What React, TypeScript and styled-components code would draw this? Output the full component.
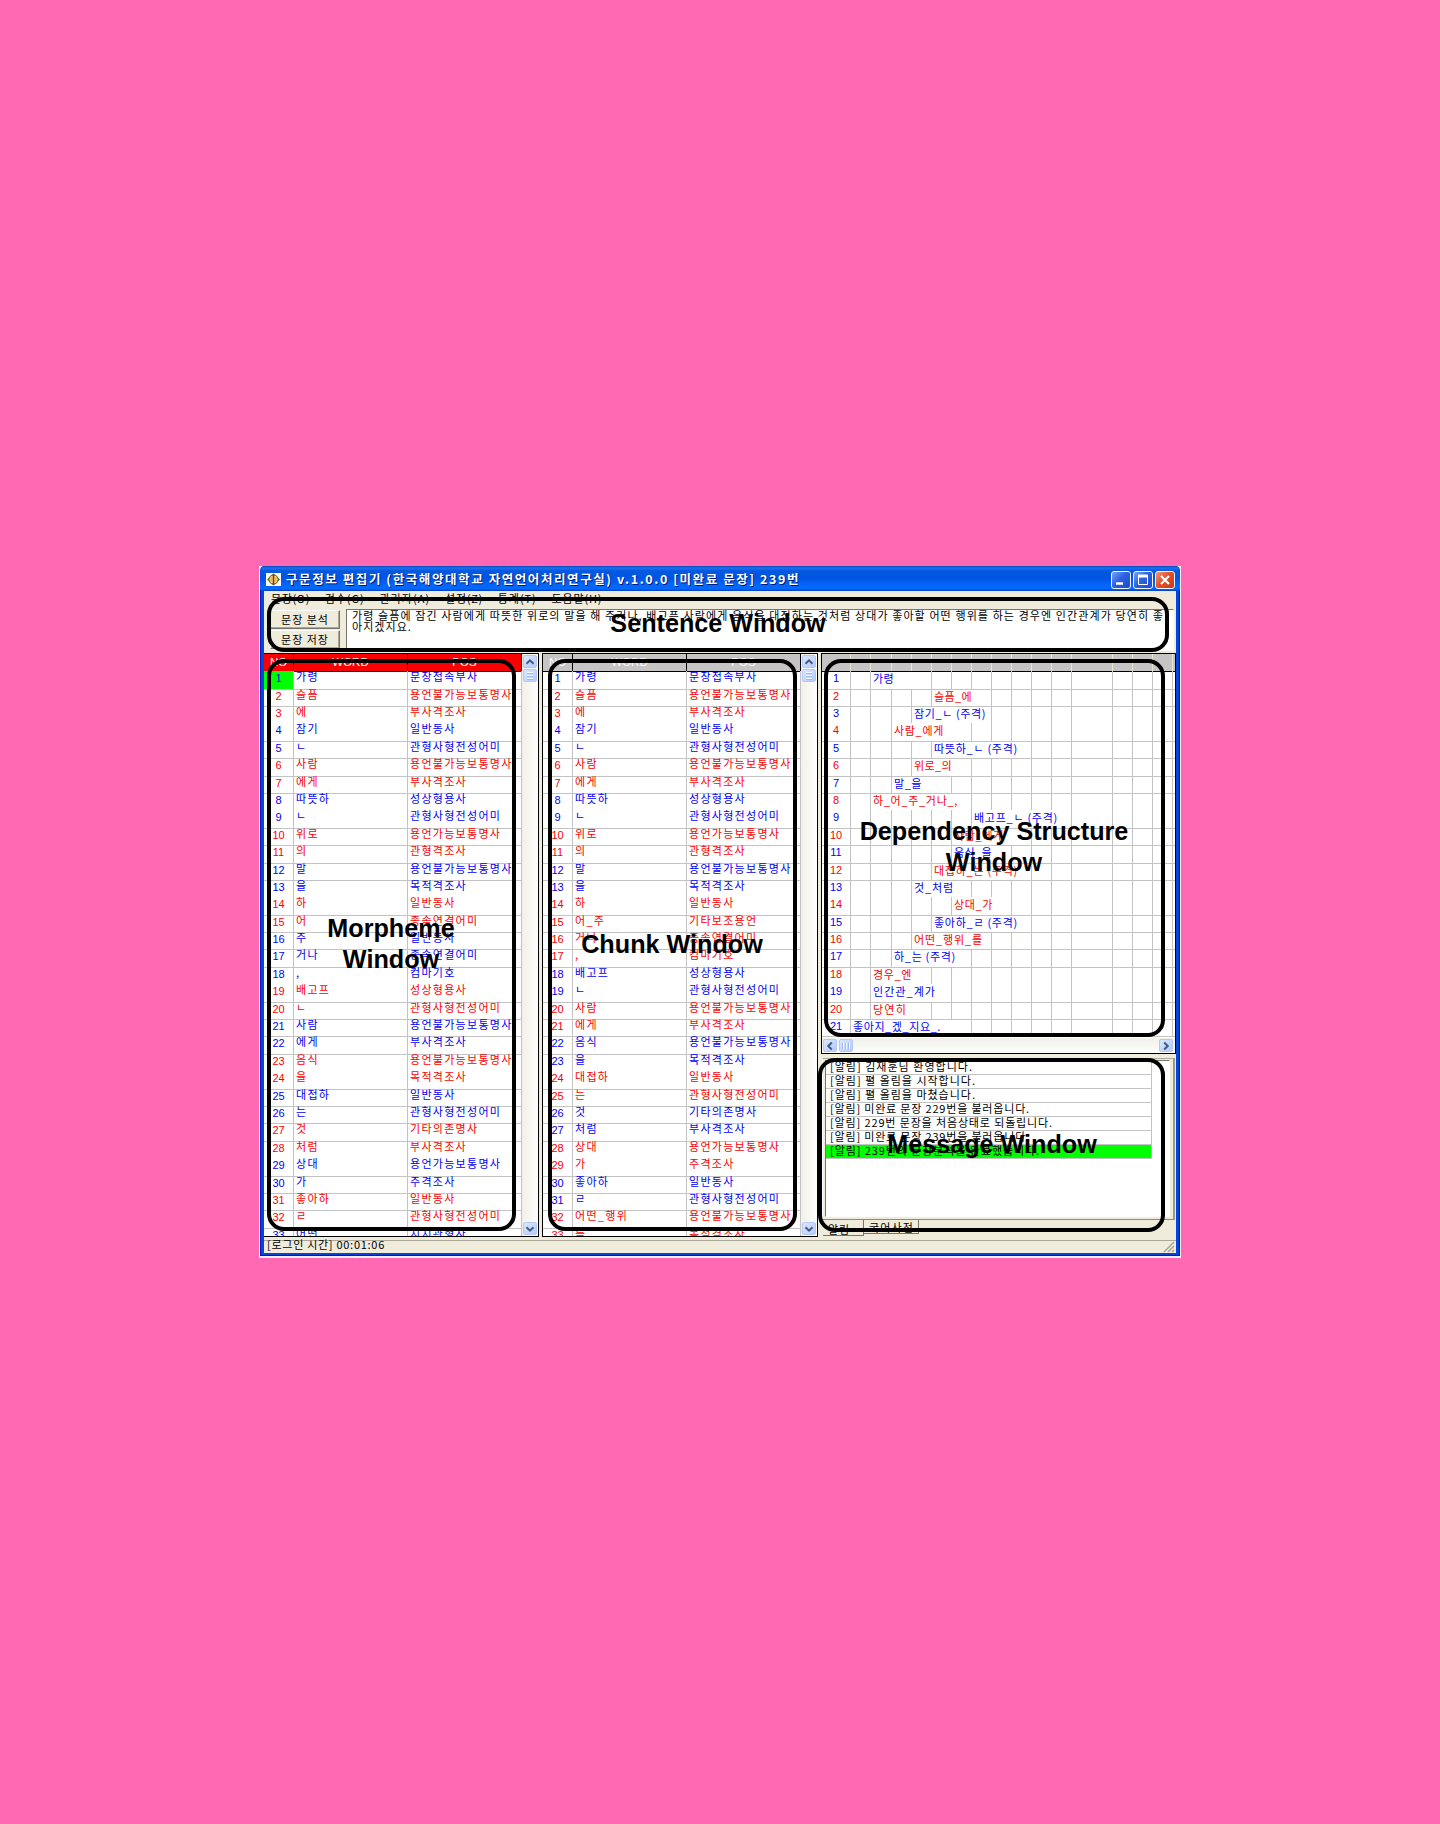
import React, { useLayoutEffect, useRef, useState } from "react";
import styled, { createGlobalStyle, css } from "styled-components";

const BLUE = "#0000f4";
const RED = "#fa0000";
const FACE = "#efecdc";
const GRID = "#c3c3c3";
const hangul = `"Noto Sans CJK KR", "Liberation Sans", sans-serif`;

const Global = createGlobalStyle`
  html, body { margin: 0; background: #ff69b4; }
  * { box-sizing: border-box; }
`;

/* ---------- text stretched to a given width ---------- */
const Line = styled.span`
  display: inline-block;
  white-space: pre;
`;

function Fit({ width, children }: { width: number; children: string }) {
  const ref = useRef<HTMLSpanElement>(null);
  const [spacing, setSpacing] = useState(0);
  useLayoutEffect(() => {
    if (ref.current) {
      setSpacing((width - ref.current.getBoundingClientRect().width) / children.length);
    }
  }, [width, children]);
  return (
    <Line ref={ref} style={{ letterSpacing: spacing }}>
      {children}
    </Line>
  );
}

/* ---------- frame ---------- */
const Page = styled.div`
  width: 1440px;
  height: 1824px;
  padding: 566px 0 0 259px;
  background: #ff69b4;
  overflow: hidden;
`;
const Shell = styled.div`
  position: relative;
  width: 922px;
  height: 692px;
  padding: 0 1px 2px;
  background: #f4eef8;
  font-family: ${hangul};
  font-size: 11px;
  color: #000;
`;
const AppFrame = styled.div`
  display: flex;
  flex-direction: column;
  height: 690px;
  background: #0543dd;
  border-radius: 5px 5px 0 0;
  border-bottom: 1px solid #001a8c;
  box-shadow: inset 1px 0 #001fb4, inset -1px 0 #001a9c;
  overflow: hidden;
`;
const TitleBar = styled.header`
  display: flex;
  align-items: center;
  height: 25px;
  flex: none;
  padding: 2px 5px 0 6px;
  background: linear-gradient(#0a48b8 0, #1a70f0 2px, #0458e0 5px, #0054e4 12px, #0468fc 20px, #0468fc 23px, #003cc0 25px);
`;
const Title = styled.h1`
  margin: -1px auto 0 5px;
  font-size: 12.5px;
  line-height: 20px;
  font-weight: 700;
  color: #fff;
  text-shadow: 1px 1px #001a78;
`;
const Caption = styled.span<{ $close?: boolean }>`
  display: grid;
  place-items: center;
  width: 20px;
  height: 18px;
  margin-left: 2px;
  border: 1px solid #f2f4ff;
  border-radius: 3px;
  background: ${(p) =>
    p.$close
      ? "linear-gradient(135deg, #f09a7c, #e2512c 45%, #c33c14)"
      : "linear-gradient(135deg, #7aa4f4, #2c62e2 45%, #1c4cc8)"};
`;
const Client = styled.div`
  display: flex;
  flex-direction: column;
  flex: 1;
  margin: 0 4px 2px;
  background: ${FACE};
  min-height: 0;
`;
const Menu = styled.nav`
  display: flex;
  height: 17px;
  flex: none;
  padding-left: 7px;
  gap: 14.7px;
  font-size: 11px;
  line-height: 15px;
`;
const SentencePane = styled.section`
  display: flex;
  gap: 6px;
  height: 45px;
  flex: none;
  padding: 1px 2px 2px 6px;
`;
const Buttons = styled.div`
  display: flex;
  flex-direction: column;
  gap: 1px;
  padding-top: 1px;
  width: 70px;
`;
const Button = styled.button`
  height: 19px;
  padding: 0 0 1px;
  border: 1px solid;
  border-color: #fff #77756a #77756a #fff;
  box-shadow: inset -1px -1px #aca899;
  background: ${FACE};
  font: 11px/15px ${hangul};
  color: #000;
`;
const SentenceBox = styled.div`
  display: flex;
  flex-direction: column;
  align-items: flex-start;
  flex: 1;
  border: 1px solid;
  border-color: #77756a #fff #fff #77756a;
  background: #fff;
  padding: 0 0 0 5px;
  font-size: 11px;
  line-height: 11px;
`;

/* ---------- panels ---------- */
const Panels = styled.main`
  display: flex;
  gap: 3px;
  height: 584px;
  flex: none;
`;
const GridPanel = styled.section<{ $width: number; $first?: boolean }>`
  display: flex;
  width: ${(p) => p.$width}px;
  border: 1px solid #000;
  border-left-width: ${(p) => (p.$first ? 0 : 1)}px;
  background: #fff;
`;
const Table = styled.div`
  display: flex;
  flex-direction: column;
  width: 258px;
  overflow: hidden;
`;
const Cols = css`
  display: grid;
  grid-template-columns: 30px 114px 114px;
`;
const Head = styled.div<{ $bg: string }>`
  ${Cols}
  height: 18px;
  flex: none;
  background: ${(p) => p.$bg};
  border-bottom: 1px solid #000;
  color: #fff;
  font: 11.5px/16px "Liberation Sans", sans-serif;
  text-align: center;
  span { border-right: 1px solid #000; }
`;
const Row = styled.div<{ $color: string; $line: boolean; $top?: boolean }>`
  ${Cols}
  flex: none;
  height: ${(p) => (p.$top ? 16.6 : 17.4)}px;
  border-top: ${(p) => (p.$line ? 1 : 0)}px solid ${GRID};
  padding-top: ${(p) => (p.$line || p.$top ? 0 : 1)}px;
  color: ${(p) => p.$color};
`;
const Cell = styled.span`
  border-right: 1px solid ${GRID};
  margin-top: -1px;
  padding-left: 2px;
  font-size: 11px;
  line-height: 16px;
  letter-spacing: 1.28px;
  white-space: nowrap;
  > span { display: block; margin-top: -3px; }
`;
const Pos = styled(Cell)`
  padding-right: 9px;
  min-width: 0;
  > span { overflow: hidden; }
`;
const Num = styled.span<{ $on?: boolean }>`
  border-right: 1px solid ${GRID};
  margin-top: -1px;
  font: 11px/14px "Liberation Sans", sans-serif;
  text-align: center;
  background: ${(p) => (p.$on ? "#00ff00" : "transparent")};
`;

/* ---------- scroll bars ---------- */
const VScroll = styled.div`
  display: flex;
  flex-direction: column;
  flex: 1;
  padding: 1px 0 1px 1px;
  background: linear-gradient(90deg, #f1f0e8, #fefefc);
`;
const HScroll = styled.div`
  display: flex;
  align-items: center;
  height: 15px;
  flex: none;
  padding: 1px 2px 1px 1px;
  background: linear-gradient(#f1f0e8, #fefefc);
`;
const ScrollKey = styled.span<{ $push?: boolean; $side?: boolean }>`
  display: grid;
  place-items: center;
  width: 14px;
  height: 13px;
  flex: none;
  border: 1px solid #b4c8f6;
  border-radius: 2px;
  background: linear-gradient(135deg, #dbe7fe, #b3cbfb);
  margin-top: ${(p) => (p.$push ? "auto" : 0)};
  margin-left: ${(p) => (p.$side ? "auto" : 0)};
`;
const Thumb = styled(ScrollKey)`
  margin: 0 0 0 2px;
`;
const VThumb = styled(ScrollKey)`
  margin-top: 1px;
`;

const Chevron = ({ turn }: { turn: number }) => (
  <svg width="10" height="10" viewBox="0 0 10 10">
    <path d="M1.5 6.8 5 3.3 8.5 6.8" fill="none" stroke="#465a86" strokeWidth="2" transform={`rotate(${turn} 5 5)`} />
  </svg>
);
const Grip = ({ turn }: { turn: number }) => (
  <svg width="10" height="10" viewBox="0 0 10 10">
    <path d="M2 1.5h6M2 4.5h6M2 7.5h6" stroke="#f4f8ff" transform={`rotate(${turn} 5 5)`} />
    <path d="M2 2.5h6M2 5.5h6M2 8.5h6" stroke="#9ab8f4" transform={`rotate(${turn} 5 5)`} />
  </svg>
);

/* ---------- right column ---------- */
const RightColumn = styled.div`
  display: flex;
  flex-direction: column;
  width: 355px;
`;
const DepPanel = styled.section`
  display: flex;
  flex-direction: column;
  height: 401px;
  flex: none;
  border: 1px solid #000;
  background: #fff;
`;
const depCols = css`
  display: grid;
  grid-template-columns: 29px 20px 21px repeat(9, 20px) 41px repeat(3, 20px) 1fr;
`;
const DepHead = styled.div`
  ${depCols}
  height: 18px;
  flex: none;
  background: #c6c4c5;
  border-bottom: 1px solid #000;
  span { border-right: 1px solid #ebe7cc; }
  span:last-child { border: 0; }
`;
const DepRow = styled.div<{ $color: string; $line: boolean; $top?: boolean }>`
  ${depCols}
  flex: none;
  height: ${(p) => (p.$top ? 16.6 : 17.4)}px;
  border-top: ${(p) => (p.$line ? 1 : 0)}px solid ${GRID};
  padding-top: ${(p) => (p.$line || p.$top ? 0 : 1)}px;
  color: ${(p) => p.$color};
`;
const DepCell = styled.span<{ $span?: number }>`
  grid-column: span ${(p) => p.$span || 1};
  margin-top: -1px;
  border-right: 1px solid ${GRID};
  padding-left: 2px;
  font-size: 11px;
  line-height: 15px;
  white-space: nowrap;
  &:last-child { border: 0; }
`;
const DepFoot = styled.div`
  flex: 1;
  border-top: 1px solid ${GRID};
`;
const Messages = styled.section`
  display: flex;
  flex-direction: column;
  margin: 4px 1px 0 1px;
  height: 164px;
  border: 1px solid;
  border-color: #aca899 #fff #8d8b80 #fff;
  border-right: 2px solid #9a978b;
  padding: 1px 3px 2px 2px;
`;
const MessageList = styled.div`
  flex: 1;
  border: 1px solid;
  border-color: #77756a #fff #fff #77756a;
  background: #fff;
`;
const Message = styled.div<{ $on?: boolean }>`
  display: flex;
  align-items: flex-start;
  width: 326px;
  height: 14px;
  padding: 0 0 0 4px;
  border: 1px solid ${GRID};
  border-width: 0 1px 1px 0;
  background: ${(p) => (p.$on ? "#00ff00" : "#fff")};
  font-size: 11px;
  line-height: 16px;
  white-space: nowrap;
  span { margin-top: -3px; }
`;
const Tabs = styled.div`
  display: flex;
  height: 17px;
  margin-left: 2px;
`;
const Tab = styled.span<{ $on?: boolean }>`
  width: ${(p) => (p.$on ? 41 : 55)}px;
  height: ${(p) => (p.$on ? 16 : 14)}px;
  padding-left: 5px;
  border-right: 1px solid #77756a;
  border-bottom: 1px solid #77756a;
  font-size: 11px;
  line-height: ${(p) => (p.$on ? 18 : 14)}px;
`;
const Status = styled.footer`
  display: flex;
  justify-content: space-between;
  align-items: flex-end;
  margin-top: 3px;
  flex: 1;
  border-top: 1px solid #aca899;
  padding-left: 3px;
  font-size: 11px;
  line-height: 13px;
`;
const StatusText = styled.span`
  align-self: flex-start;
  margin-top: -3px;
`;

/* ---------- annotations ---------- */
const Outline = styled.div<{ $x: number; $y: number; $w: number; $h: number }>`
  position: absolute;
  left: ${(p) => p.$x}px;
  top: ${(p) => p.$y}px;
  width: ${(p) => p.$w}px;
  height: ${(p) => p.$h}px;
  border: 4px solid #000;
  border-radius: 17px;
`;
const Label = styled.div<{ $x: number; $y: number }>`
  position: absolute;
  left: ${(p) => p.$x}px;
  top: ${(p) => p.$y}px;
  transform: translateX(-50%);
  font: 700 25.2px/30.5px "Liberation Sans", sans-serif;
  text-align: center;
  white-space: pre;
`;

/* ---------- data ---------- */
type Entry = [string, string];
const morphemes: Entry[] = [
  ["가령", "문장접속부사"], ["슬픔", "용언불가능보통명사"], ["에", "부사격조사"], ["잠기", "일반동사"],
  ["ㄴ", "관형사형전성어미"], ["사람", "용언불가능보통명사"], ["에게", "부사격조사"], ["따뜻하", "성상형용사"],
  ["ㄴ", "관형사형전성어미"], ["위로", "용언가능보통명사"], ["의", "관형격조사"], ["말", "용언불가능보통명사"],
  ["을", "목적격조사"], ["하", "일반동사"], ["어", "종속연결어미"], ["주", "일반동사"], ["거나", "종속연결어미"],
  [",", "컴마기호"], ["배고프", "성상형용사"], ["ㄴ", "관형사형전성어미"], ["사람", "용언불가능보통명사"],
  ["에게", "부사격조사"], ["음식", "용언불가능보통명사"], ["을", "목적격조사"], ["대접하", "일반동사"],
  ["는", "관형사형전성어미"], ["것", "기타의존명사"], ["처럼", "부사격조사"], ["상대", "용언가능보통명사"],
  ["가", "주격조사"], ["좋아하", "일반동사"], ["ㄹ", "관형사형전성어미"], ["어떤", "지시관형사"],
];
const chunks: Entry[] = [
  ...morphemes.slice(0, 14),
  ["어_주", "기타보조용언"], ["거나", "종속연결어미"], [",", "컴마기호"], ["배고프", "성상형용사"],
  ["ㄴ", "관형사형전성어미"], ["사람", "용언불가능보통명사"], ["에게", "부사격조사"], ["음식", "용언불가능보통명사"],
  ["을", "목적격조사"], ["대접하", "일반동사"], ["는", "관형사형전성어미"], ["것", "기타의존명사"],
  ["처럼", "부사격조사"], ["상대", "용언가능보통명사"], ["가", "주격조사"], ["좋아하", "일반동사"],
  ["ㄹ", "관형사형전성어미"], ["어떤_행위", "용언불가능보통명사"], ["를", "목적격조사"],
];
const morphemeRed = [2, 3, 6, 7, 10, 11, 14, 15, 19, 20, 23, 24, 27, 28, 31, 32];
const chunkRed = [2, 3, 6, 7, 10, 11, 14, 15, 16, 17, 20, 21, 24, 25, 28, 29, 32, 33];

/* text, first column, columns covered, drawn width */
const deps: [string, number, number, number][] = [
  ["가령", 1, 3, 21], ["슬픔_에", 4, 3, 38], ["잠기_ㄴ (주격)", 3, 4, 72], ["사람_에게", 2, 4, 50],
  ["따뜻하_ㄴ (주격)", 4, 5, 84], ["위로_의", 3, 3, 38], ["말_을", 2, 3, 28], ["하_어_주_거나_,", 1, 5, 85],
  ["배고프_ㄴ (주격)", 6, 5, 84], ["사람_에게", 5, 4, 50], ["음식_을", 5, 3, 38], ["대접하_는 (주격)", 4, 5, 84],
  ["것_처럼", 3, 3, 40], ["상대_가", 5, 3, 39], ["좋아하_ㄹ (주격)", 4, 5, 84], ["어떤_행위_를", 3, 4, 69],
  ["하_는 (주격)", 2, 4, 62], ["경우_엔", 1, 3, 39], ["인간관_계가", 1, 4, 63], ["당연히", 1, 3, 34],
  ["좋아지_겠_지요_.", 0, 6, 88],
];
const messages: [string, number][] = [
  ["[알림] 김재훈님 환영합니다.", 143], ["[알림] 펼 올림을 시작합니다.", 146], ["[알림] 펼 올림을 마쳤습니다.", 146],
  ["[알림] 미완료 문장 229번을 불러옵니다.", 200], ["[알림] 229번 문장을 처음상태로 되돌립니다.", 223],
  ["[알림] 미완료 문장 239번을 불러옵니다.", 200], ["[알림] 239번의 문장분석을 완료했습니다.", 210],
];
const menu: [string, number][] = [
  ["문장(O)", 39], ["검수(G)", 40], ["관리자(A)", 51], ["설정(Z)", 38], ["통계(T)", 39], ["도움말(H)", 51],
];
const ruled = (i: number) => i > 0 && i % 5 !== 3;

function WordGrid({ rows, red, bg, active }: { rows: Entry[]; red: number[]; bg: string; active?: boolean }) {
  return (
    <Table>
      <Head $bg={bg}>
        <span>NO</span>
        <span>WORD</span>
        <span>POS</span>
      </Head>
      {rows.map(([word, pos], i) => (
        <Row key={i} $top={i === 0} $line={ruled(i)} $color={red.includes(i + 1) ? RED : BLUE}>
          <Num $on={active && i === 0}>{i + 1}</Num>
          <Cell><span>{word}</span></Cell>
          <Pos><span>{pos}</span></Pos>
        </Row>
      ))}
    </Table>
  );
}

function VerticalBar() {
  return (
    <VScroll>
      <ScrollKey><Chevron turn={0} /></ScrollKey>
      <VThumb><Grip turn={0} /></VThumb>
      <ScrollKey $push><Chevron turn={180} /></ScrollKey>
    </VScroll>
  );
}

export default function App() {
  return (
    <Page>
      <Global />
      <Shell>
        <AppFrame>
          <TitleBar>
            <svg width="15" height="13" viewBox="0 0 15 13">
              <path d="M0 0h15v13H0z" fill="#fff" />
              <path d="M7.5.2 14 6.5 7.5 12.8 1 6.5Z" fill="#6e7448" />
              <circle cx="7.5" cy="6.5" r="4.6" fill="#f4e468" stroke="#5c5434" />
              <path d="M7.5 2v9" stroke="#a01c40" strokeWidth="1.6" />
              <path d="M5.2 4v5M9.8 4v5" stroke="#d8a03c" />
            </svg>
            <Title>
              <Fit width={514}>구문정보 편집기 (한국해양대학교 자연언어처리연구실) v.1.0.0 [미완료 문장] 239번</Fit>
            </Title>
            <Caption>
              <svg width="16" height="14" viewBox="0 0 16 14"><path d="M3 10.5h7" stroke="#fff" strokeWidth="2.4" /></svg>
            </Caption>
            <Caption>
              <svg width="16" height="14" viewBox="0 0 16 14">
                <path d="M3.5 3v8.5h9V3" fill="none" stroke="#fff" />
                <path d="M3 3h10" stroke="#fff" strokeWidth="3" />
              </svg>
            </Caption>
            <Caption $close>
              <svg width="16" height="14" viewBox="0 0 16 14"><path d="m4 3 8 8m0-8-8 8" stroke="#fff" strokeWidth="2.2" /></svg>
            </Caption>
          </TitleBar>
          <Client>
            <Menu>
              {menu.map(([text, width]) => (
                <Fit key={text} width={width}>{text}</Fit>
              ))}
            </Menu>
            <SentencePane>
              <Buttons>
                <Button><Fit width={48}>문장 분석</Fit></Button>
                <Button><Fit width={48}>문장 저장</Fit></Button>
              </Buttons>
              <SentenceBox>
                <Fit width={812}>
                  가령 슬픔에 잠긴 사람에게 따뜻한 위로의 말을 해 주거나, 배고픈 사람에게 음식을 대접하는 것처럼 상대가 좋아할 어떤 행위를 하는 경우엔 인간관계가 당연히 좋
                </Fit>
                <Fit width={60}>아지겠지요.</Fit>
              </SentenceBox>
            </SentencePane>
            <Panels>
              <GridPanel $width={275} $first>
                <WordGrid rows={morphemes} red={morphemeRed} bg="#fb0000" active />
                <VerticalBar />
              </GridPanel>
              <GridPanel $width={276}>
                <WordGrid rows={chunks} red={chunkRed} bg="#c6c4c5" />
                <VerticalBar />
              </GridPanel>
              <RightColumn>
                <DepPanel>
                  <DepHead>
                    {Array.from({ length: 17 }, (_, i) => <span key={i} />)}
                  </DepHead>
                  {deps.map(([text, start, span, width], i) => (
                    <DepRow key={i} $top={i === 0} $line={ruled(i)} $color={i % 2 ? RED : BLUE}>
                      <Num>{i + 1}</Num>
                      {Array.from({ length: start }, (_, c) => <DepCell key={c} />)}
                      <DepCell $span={span}><Fit width={width}>{text}</Fit></DepCell>
                      {Array.from({ length: 16 - start - span }, (_, c) => <DepCell key={c + 20} />)}
                    </DepRow>
                  ))}
                  <DepFoot />
                  <HScroll>
                    <ScrollKey><Chevron turn={-90} /></ScrollKey>
                    <Thumb><Grip turn={90} /></Thumb>
                    <ScrollKey $side><Chevron turn={90} /></ScrollKey>
                  </HScroll>
                </DepPanel>
                <Messages>
                  <MessageList>
                    {messages.map(([text, width], i) => (
                      <Message key={i} $on={i === 6}><Fit width={width}>{text}</Fit></Message>
                    ))}
                  </MessageList>
                </Messages>
                <Tabs>
                  <Tab $on><Fit width={22}>알림</Fit></Tab>
                  <Tab><Fit width={45}>국어사전</Fit></Tab>
                </Tabs>
              </RightColumn>
            </Panels>
            <Status>
              <StatusText><Fit width={118}>[로그인 시간] 00:01:06</Fit></StatusText>
              <svg width="13" height="12" viewBox="0 0 13 12">
                <path d="M1 11 11 1M5 11l6-6M9 11l2-2" stroke="#a9a694" strokeWidth="1.5" />
              </svg>
            </Status>
          </Client>
        </AppFrame>

        <Outline $x={8} $y={31} $w={902} $h={55} />
        <Outline $x={8} $y={93} $w={249} $h={572} />
        <Outline $x={289} $y={93} $w={249} $h={572} />
        <Outline $x={565} $y={93} $w={341} $h={378} />
        <Outline $x={559} $y={492} $w={347} $h={174} />
        <Label $x={459} $y={42}>Sentence Window</Label>
        <Label $x={132} $y={347}>{"Morpheme\nWindow"}</Label>
        <Label $x={413} $y={363}>Chunk Window</Label>
        <Label $x={735} $y={250}>{"Dependency Structure\nWindow"}</Label>
        <Label $x={733} $y={563}>Message Window</Label>
      </Shell>
    </Page>
  );
}
